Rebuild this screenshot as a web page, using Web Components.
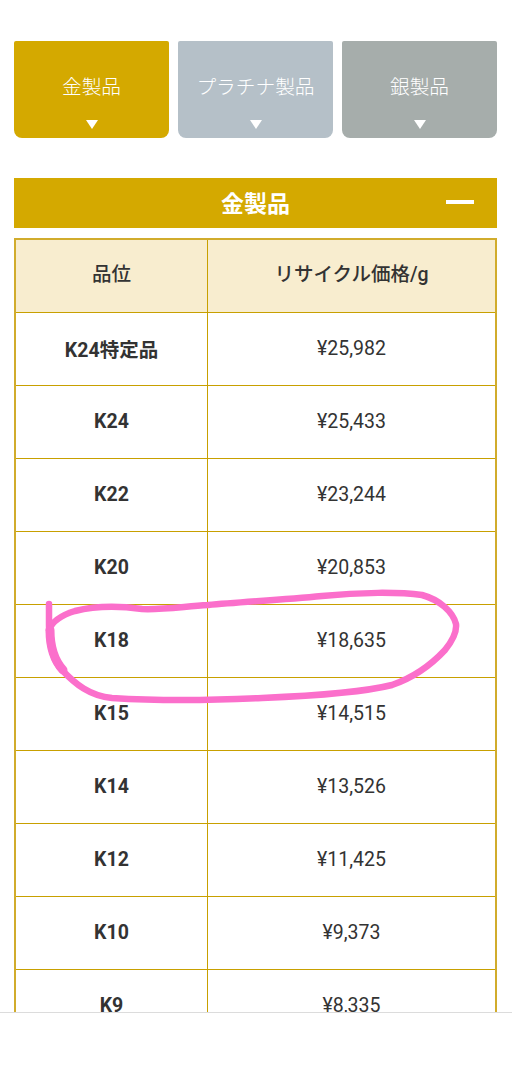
<!DOCTYPE html>
<html lang="ja">
<head>
<meta charset="utf-8">
<title>金製品</title>
<style>
    html, body {
        margin: 0;
        background: #fff;
        font-family: Roboto, "Noto Sans CJK JP", sans-serif;
        color: #333;
    }

    main {
        display: block;
        padding: 41px 15px 0 14px;
    }
</style>
</head>
<body>
<main>
    <price-tabs>
        <price-tab color="#d4a900">金製品</price-tab>
        <price-tab color="#b5c0c8">プラチナ製品</price-tab>
        <price-tab color="#a6adab">銀製品</price-tab>
    </price-tabs>
    <section-bar>金製品</section-bar>
    <price-table id="gold"></price-table>
</main>
<pen-mark></pen-mark>
<bottom-bar></bottom-bar>

<script>
class PriceTabs extends HTMLElement {
    constructor() {
        super();
        this.attachShadow({ mode: 'open' });
        this.shadowRoot.innerHTML = `
        <style>
            :host {
                display: grid;
                grid-template-columns: repeat(3, 155px);
                column-gap: 9px;
            }
        </style>
        <slot></slot>
        `;
    }
}

class PriceTab extends HTMLElement {
    constructor() {
        super();
        this.attachShadow({ mode: 'open' });
    }

    connectedCallback() {
        const color = this.getAttribute('color') || '#d4a900';
        this.shadowRoot.innerHTML = `
        <style>
            :host {
                display: flex;
                flex-direction: column;
                align-items: center;
                height: 97px;
                box-sizing: border-box;
                padding-top: 33px;
                background: ${color};
                border-radius: 2px 2px 8px 8px;
                color: #fff;
                font-size: 19.7px;
                font-weight: 300;
                line-height: 26px;
                white-space: nowrap;
            }

            .arrow {
                width: 0;
                height: 0;
                margin-top: 20px;
                border-left: 6px solid transparent;
                border-right: 6px solid transparent;
                border-top: 9px solid #fff;
            }

            .label {
                position: relative;
                top: 1px;
            }
        </style>
        <div class="label"><slot></slot></div>
        <div class="arrow"></div>
        `;
    }
}

class SectionBar extends HTMLElement {
    constructor() {
        super();
        this.attachShadow({ mode: 'open' });
        this.shadowRoot.innerHTML = `
        <style>
            :host {
                display: flex;
                align-items: center;
                justify-content: center;
                position: relative;
                height: 50px;
                margin-top: 40px;
                width: 483px;
                box-sizing: border-box;
                padding-bottom: 3px;
                background: #d4a900;
                color: #fff;
                font-size: 23px;
                font-weight: 700;
            }

            .dash {
                position: absolute;
                right: 23px;
                top: 22px;
                width: 28px;
                height: 4px;
                background: #fff;
            }
        </style>
        <slot></slot>
        <div class="dash"></div>
        `;
    }
}

class PriceTable extends HTMLElement {
    constructor() {
        super();
        this.attachShadow({ mode: 'open' });
    }

    connectedCallback() {
        const rows = [
            ['K24特定品', '¥25,982'],
            ['K24', '¥25,433'],
            ['K22', '¥23,244'],
            ['K20', '¥20,853'],
            ['K18', '¥18,635'],
            ['K15', '¥14,515'],
            ['K14', '¥13,526'],
            ['K12', '¥11,425'],
            ['K10', '¥9,373'],
            ['K9', '¥8,335']
        ];

        this.shadowRoot.innerHTML = `
        <style>
            :host {
                display: block;
                width: 483px;
                margin-top: 10px;
                box-sizing: border-box;
                border: 2px solid #d1ac2c;
                border-bottom-width: 1px;
            }

            .row {
                display: grid;
                grid-template-columns: 192px 1fr;
                height: 73px;
                box-sizing: border-box;
                border-top: 1px solid #c8a000;
            }

            .row.head {
                height: 72px;
                border-top: 0;
                background: #f8edcf;
            }

            .row > div {
                display: flex;
                align-items: center;
                justify-content: center;
                box-sizing: border-box;
                padding-bottom: 2px;
                font-size: 19.5px;
            }

            .row > div:first-child {
                border-right: 1px solid #c8a000;
                font-weight: 700;
            }

            .row.head > div {
                padding-bottom: 7px;
                font-weight: 500;
            }
        </style>
        <div class="row head"><div>品位</div><div>リサイクル価格/g</div></div>
        ${rows.map(r => `<div class="row"><div>${r[0]}</div><div>${r[1]}</div></div>`).join('')}
        `;
    }
}

// freehand circle somebody drew over the K18 row
class PenMark extends HTMLElement {
    constructor() {
        super();
        this.attachShadow({ mode: 'open' });
        this.shadowRoot.innerHTML = `
        <style>
            :host {
                display: block;
                position: absolute;
                left: 0;
                top: 0;
                pointer-events: none;
            }

            svg {
                display: block;
            }
        </style>
        <svg width="512" height="1080" viewBox="0 0 512 1080" fill="none">
            <path d="M49 604 L49 625 C49 645 52 660 62 670 C75 684 90 696 112 698 C160 701 220 700 262 698 C310 696 360 693 392 685 C415 677 432 664 445 650 C453 640 457 632 456 624 C453 612 440 600 422 595 C400 592 360 592 322 596 C280 600 240 602 208 605 C180 607 160 610 142 609 C120 606 95 606 75 611 C62 615 52 622 49 630" stroke="#fb6fcb" stroke-width="6.5" stroke-linecap="round" stroke-linejoin="round"/>
            <path d="M50 630 C50 645 53 659 63 670" stroke="#fb6fcb" stroke-width="9" stroke-linecap="round"/>
        </svg>
        `;
    }
}

class BottomBar extends HTMLElement {
    constructor() {
        super();
        this.attachShadow({ mode: 'open' });
        this.shadowRoot.innerHTML = `
        <style>
            :host {
                display: block;
                position: fixed;
                left: 0;
                right: 0;
                bottom: 0;
                height: 68px;
                box-sizing: border-box;
                background: #fff;
                border-top: 1px solid #dcdcdc;
            }
        </style>
        `;
    }
}

customElements.define('price-tabs', PriceTabs);
customElements.define('price-tab', PriceTab);
customElements.define('section-bar', SectionBar);
customElements.define('price-table', PriceTable);
customElements.define('pen-mark', PenMark);
customElements.define('bottom-bar', BottomBar);
</script>
</body>
</html>
